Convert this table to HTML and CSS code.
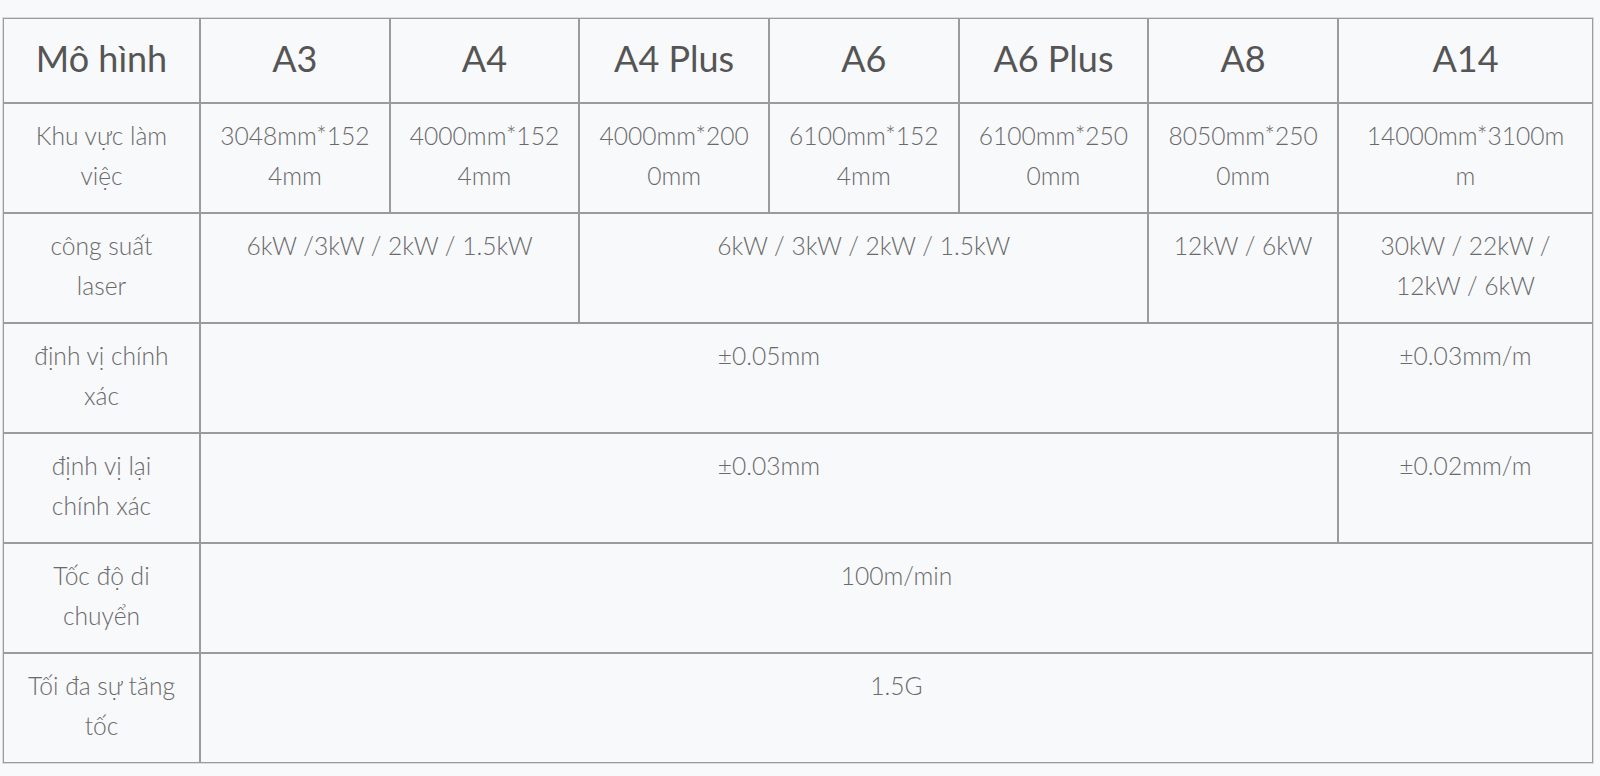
FILE: index.html
```html
<!DOCTYPE html>
<html lang="vi">
<head>
<meta charset="utf-8">
<title>Thông số kỹ thuật</title>
<link rel="stylesheet" href="styles.css">
</head>
<body>
<div class="wrap">
<table class="spec">
  <colgroup>
    <col class="c-label">
    <col class="c-mid"><col class="c-mid"><col class="c-mid"><col class="c-mid"><col class="c-mid"><col class="c-mid">
    <col class="c-last">
  </colgroup>
  <thead>
    <tr class="head">
      <th>Mô hình</th>
      <th>A3</th>
      <th>A4</th>
      <th>A4 Plus</th>
      <th>A6</th>
      <th>A6 Plus</th>
      <th>A8</th>
      <th>A14</th>
    </tr>
  </thead>
  <tbody>
    <tr>
      <td class="label">Khu vực làm việc</td>
      <td>3048mm*1524mm</td>
      <td>4000mm*1524mm</td>
      <td>4000mm*2000mm</td>
      <td>6100mm*1524mm</td>
      <td>6100mm*2500mm</td>
      <td>8050mm*2500mm</td>
      <td>14000mm*3100mm</td>
    </tr>
    <tr>
      <td class="label">công suất laser</td>
      <td colspan="2">6kW /3kW / 2kW / 1.5kW</td>
      <td colspan="3">6kW / 3kW / 2kW / 1.5kW</td>
      <td>12kW / 6kW</td>
      <td>30kW / 22kW / 12kW / 6kW</td>
    </tr>
    <tr>
      <td class="label">định vị chính xác</td>
      <td colspan="6">±0.05mm</td>
      <td>±0.03mm/m</td>
    </tr>
    <tr>
      <td class="label">định vị lại chính xác</td>
      <td colspan="6">±0.03mm</td>
      <td>±0.02mm/m</td>
    </tr>
    <tr>
      <td class="label">Tốc độ di chuyển</td>
      <td colspan="7">100m/min</td>
    </tr>
    <tr>
      <td class="label">Tối đa sự tăng tốc</td>
      <td colspan="7">1.5G</td>
    </tr>
  </tbody>
</table>
</div>
</body>
</html>
```

FILE: styles.css
```css
html, body {
  margin: 0;
  padding: 0;
  background: #f8f9fb;
}

.wrap {
  padding: 17px 0 0 2px;
}

.spec {
  table-layout: fixed;
  border-collapse: separate;
  border-spacing: 0;
  border: 1px solid #dcdcdc;
  width: 1592px;
  font-family: Lato, "Open Sans", sans-serif;
  color: #6a6a6a;
}

.c-label { width: 197px; }
.c-mid { width: 189.67px; }
.c-last { width: 255px; }

.spec th,
.spec td {
  border: 1px solid #9b9b9b;
  text-align: center;
  overflow-wrap: anywhere;
  padding: 12px 18px 16px;
  font-size: 24.6px;
  line-height: 40px;
  font-weight: 300;
  vertical-align: top;
}

.spec td.label {
  padding-left: 22px;
  padding-right: 22px;
}

.spec .head th {
  height: 85px;
  box-sizing: border-box;
  padding: 0 10px 6px;
  font-size: 36px;
  line-height: 44px;
  font-weight: 400;
  color: #555555;
  vertical-align: middle;
}
```
